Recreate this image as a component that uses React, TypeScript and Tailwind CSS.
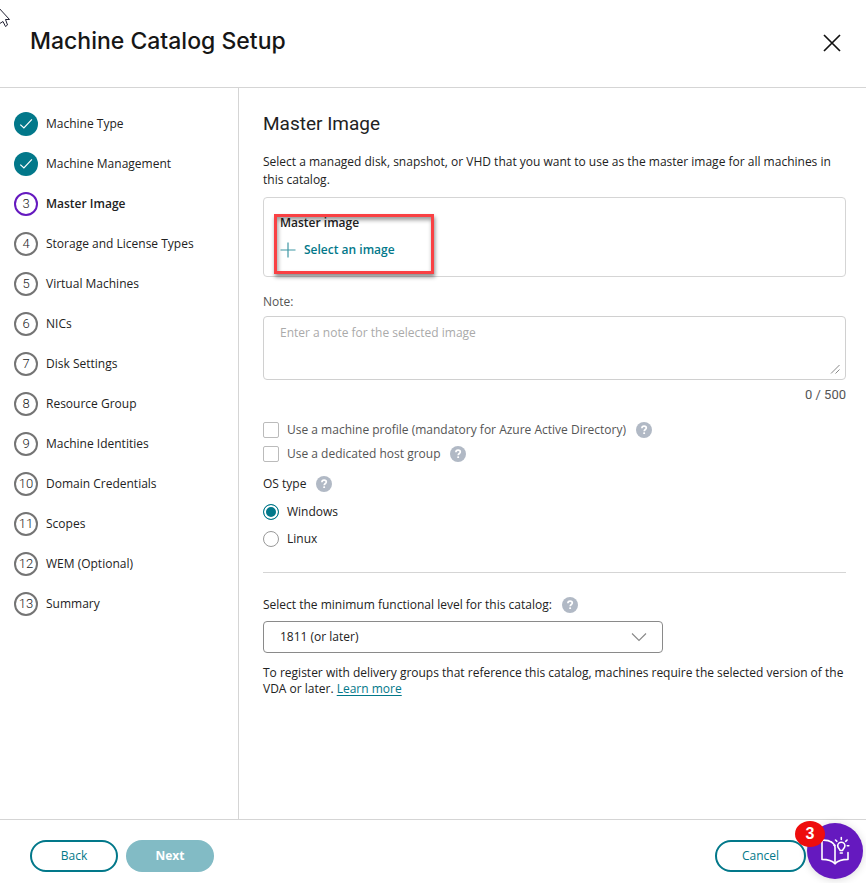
import { useState } from "react";

const steps = [
    "Machine Type",
    "Machine Management",
    "Master Image",
    "Storage and License Types",
    "Virtual Machines",
    "NICs",
    "Disk Settings",
    "Resource Group",
    "Machine Identities",
    "Domain Credentials",
    "Scopes",
    "WEM (Optional)",
    "Summary",
];

const CURRENT_STEP = 2;
const NOTE_LIMIT = 500;

function HelpIcon({ label }: { label: string }) {
    return (
        <button type="button" aria-label={label} className="shrink-0">
            <svg viewBox="0 0 16 16" className="w-4 h-4">
                <circle cx="8" cy="8" r="8" fill="#b1b9c5" />
                <path d="M5.9 6.3C5.9 4.9 6.8 4.1 8.1 4.1s2.2.8 2.2 1.9c0 1.5-2.1 1.6-2.1 3.3" fill="none" stroke="#fff" strokeWidth="1.7" />
                <rect x="7.2" y="10.3" width="1.9" height="1.8" rx="0.6" fill="#fff" />
            </svg>
        </button>
    );
}

function StepBadge({ index }: { index: number }) {
    if (index < CURRENT_STEP) {
        return (
            <span className="flex items-center justify-center w-6 h-6 rounded-full bg-[#02788a]">
                <svg viewBox="0 0 24 24" className="w-6 h-6">
                    <path d="M6.3 12.6l3.6 3.4 8-8.6" fill="none" stroke="#fff" strokeWidth="1.2" />
                </svg>
            </span>
        );
    }
    return (
        <span
            className={`flex items-center justify-center w-6 h-6 rounded-full border-2 text-[13px] leading-[18px] font-light font-[Roboto,sans-serif] ${index === CURRENT_STEP ? "border-[#6519bf]" : "border-[#747474]"
                }`}
        >
            {index + 1}
        </span>
    );
}

export default function App() {
    const [note, setNote] = useState("");
    const [profile, setProfile] = useState(false);
    const [hostGroup, setHostGroup] = useState(false);
    const [os, setOs] = useState("windows");

    return (
        <div className="relative flex flex-col min-h-screen bg-white text-[#222] text-xs leading-[18px] font-['Open_Sans','Noto_Sans',sans-serif]">
            {/* Header */}
            <header className="flex items-start justify-between h-[88px] pt-7 pl-[30px] pr-5 border-b border-[#d5d5d5]">
                <h1 className="text-[23px] leading-[26px] font-medium text-[#161616] font-[Inter,sans-serif]">Machine Catalog Setup</h1>
                <button type="button" aria-label="Close" className="p-1">
                    <svg viewBox="0 0 20 20" className="w-5 h-5">
                        <path d="M2 3l16 16M18 3L2 19" stroke="#111" strokeWidth="1.7" fill="none" />
                    </svg>
                </button>
            </header>

            <div className="flex flex-1">
                {/* Steps */}
                <nav aria-label="Setup steps" className="w-[239px] shrink-0 border-r border-[#d5d5d5] pt-6 pl-3.5">
                    <ol className="flex flex-col gap-4">
                        {steps.map((s, i) => (
                            <li
                                key={s}
                                aria-current={i === CURRENT_STEP ? "step" : undefined}
                                className="flex items-center gap-2"
                            >
                                <StepBadge index={i} />
                                <span className={i === CURRENT_STEP ? "font-semibold" : ""}>{s}</span>
                            </li>
                        ))}
                    </ol>
                </nav>

                {/* Content */}
                <main className="flex-1 min-w-0 pt-6 pl-6 pr-5 pb-6">
                    <h2 className="text-[19px] leading-6 font-[Roboto,sans-serif]">Master Image</h2>
                    <p className="mt-[17px]">
                        Select a managed disk, snapshot, or VHD that you want to use as the master image for all machines in this catalog.
                    </p>

                    <section className="relative flex flex-col items-start gap-2 mt-2 p-4 border border-[#d5d5d5] rounded">
                        <h3 className="font-semibold">Master image</h3>
                        <button type="button" className="flex items-center gap-2 h-5 font-semibold text-[#02788a]">
                            <svg viewBox="0 0 16 16" className="w-4 h-4">
                                <path d="M8 0.5v15M0.5 8h15" stroke="#3f97a4" strokeWidth="1.2" />
                            </svg>
                            Select an image
                        </button>
                        <div className="absolute left-2.5 top-4 w-40 h-[60px] border-3 border-[#f94144] shadow-[1px_3px_4px_rgba(0,0,0,0.45),inset_1px_3px_4px_rgba(0,0,0,0.4)] pointer-events-none" />
                    </section>

                    <label htmlFor="note" className="block mt-4 text-[#555]">Note:</label>
                    <div className="relative mt-[5px]">
                        <textarea
                            id="note"
                            value={note}
                            maxLength={NOTE_LIMIT}
                            onChange={(e) => setNote(e.target.value)}
                            placeholder="Enter a note for the selected image"
                            className="block w-full h-16 px-4 py-[7px] border border-[#d0d0d0] rounded resize-none placeholder:text-[#aaa]"
                        />
                        <svg viewBox="0 0 10 10" className="absolute right-1.5 bottom-1.5 w-2.5 h-2.5 pointer-events-none">
                            <path d="M1 9.5l8.5-8.5M5.5 9.5l4-4" stroke="#888" strokeWidth="1" />
                        </svg>
                    </div>
                    <p className="mt-1.5 text-right text-[13px] text-[#555] font-[Roboto,sans-serif]">{note.length} / {NOTE_LIMIT}</p>

                    <div className="mt-3.5 text-[#555]">
                        <div className="flex items-center gap-2.5 h-6">
                            <label className="flex items-center gap-2">
                                <input
                                    type="checkbox"
                                    checked={profile}
                                    onChange={(e) => setProfile(e.target.checked)}
                                    className="appearance-none w-4 h-4 border border-[#bbb] rounded-xs checked:bg-[#02788a]"
                                />
                                Use a machine profile (mandatory for Azure Active Directory)
                            </label>
                            <HelpIcon label="About machine profiles" />
                        </div>
                        <div className="flex items-center gap-2.5 h-6">
                            <label className="flex items-center gap-2">
                                <input
                                    type="checkbox"
                                    checked={hostGroup}
                                    onChange={(e) => setHostGroup(e.target.checked)}
                                    className="appearance-none w-4 h-4 border border-[#bbb] rounded-xs checked:bg-[#02788a]"
                                />
                                Use a dedicated host group
                            </label>
                            <HelpIcon label="About dedicated host groups" />
                        </div>
                    </div>

                    <fieldset className="mt-2">
                        <legend className="flex items-center gap-2.5 h-5 mb-1">
                            OS type
                            <HelpIcon label="About OS types" />
                        </legend>
                        {[
                            { value: "windows", label: "Windows" },
                            { value: "linux", label: "Linux" },
                        ].map((o) => (
                            <label key={o.value} className="flex items-center gap-2 h-[27px]">
                                <input
                                    type="radio"
                                    name="os"
                                    value={o.value}
                                    checked={os === o.value}
                                    onChange={() => setOs(o.value)}
                                    className="appearance-none w-4 h-4 rounded-full border border-[#999] checked:border-[#02788a] checked:bg-[#02788a] checked:shadow-[inset_0_0_0_2px_#fff]"
                                />
                                {o.label}
                            </label>
                        ))}
                    </fieldset>

                    <hr className="mt-5 border-[#d5d5d5]" />

                    <div className="flex items-center gap-2.5 h-6 mt-5">
                        <label htmlFor="level">Select the minimum functional level for this catalog:</label>
                        <HelpIcon label="About functional levels" />
                    </div>
                    <div className="relative w-full max-w-[400px] mt-1">
                        <select
                            id="level"
                            className="block appearance-none w-full h-8 pl-4 pr-10 bg-white border border-[#8a8a8a] rounded-sm"
                        >
                            <option>1811 (or later)</option>
                        </select>
                        <svg viewBox="0 0 16 16" className="absolute right-4 top-2 w-4 h-4 pointer-events-none">
                            <path d="M1 4.5l7 7 7-7" fill="none" stroke="#888" strokeWidth="1.1" />
                        </svg>
                    </div>
                    <p className="mt-3 leading-4">
                        To register with delivery groups that reference this catalog, machines require the selected version of the VDA or later.{" "}
                        <a href="#learn-more" className="text-[#02788a] underline underline-offset-2">Learn more</a>
                    </p>
                </main>
            </div>

            {/* Footer */}
            <footer className="flex items-start gap-2 h-16 pt-5 pl-[30px] pr-[60px] border-t border-[#d5d5d5]">
                <button type="button" className="w-[88px] h-8 rounded-full border-2 border-[#02788a] font-medium text-[#02788a]">
                    Back
                </button>
                <button type="button" className="w-[88px] h-8 rounded-full bg-[#82bbc5] font-bold text-white">
                    Next
                </button>
                <button type="button" className="w-[91px] h-8 ml-auto rounded-full border-2 border-[#02788a] font-medium text-[#02788a]">
                    Cancel
                </button>
            </footer>

            {/* Help launcher */}
            <button
                type="button"
                aria-label="Open help, 3 new items"
                className="fixed right-[3px] bottom-1 flex items-center justify-center w-14 h-14 rounded-full bg-[#6519bf] shadow-[0_1px_8px_rgba(0,0,0,0.15)]"
            >
                <svg viewBox="0 0 30 30" className="w-[30px] h-[30px]" fill="none" stroke="#fff" strokeWidth="1.6" strokeLinejoin="round" strokeLinecap="round">
                    <path d="M11.5 6.2C9.3 4.6 5.5 4 2 4.2v19.2c5 0 9.6.7 13 4.4 3.4-3.7 7.6-4.4 13-4.4V16.5" />
                    <path d="M11.5 6.2c1.8 1.2 3.5 2.7 3.5 5V27.5" />
                    <path d="M20 14.5c0-1.5-2.3-2.3-2.3-4.7a3.6 3.6 0 0 1 7.2 0c0 2.4-2.3 3.2-2.3 4.7zM20.3 17h2" />
                    <path d="M21.3 1.5v2M15.5 4l1.4 1.3M27.1 4l-1.4 1.3M27.3 9.8h1.5M14 9.2h1" />
                </svg>
                <span className="absolute -left-3 -top-0.5 flex items-center justify-center w-[30px] h-[26px] rounded-[50%] bg-[#ee0d0d] text-base font-bold text-white font-['Liberation_Sans',sans-serif]">
                    3
                </span>
            </button>

            {/* Pointer */}
            <svg viewBox="0 0 11 19" className="absolute left-0 top-[9px] w-[11px] h-[19px] pointer-events-none">
                <path d="M-2 -2L9.5 10.5H5.5L7.5 16L5.5 17.5L3 12.5L-1 15" fill="#fff" stroke="#223" strokeWidth="1" />
            </svg>
        </div>
    );
}
